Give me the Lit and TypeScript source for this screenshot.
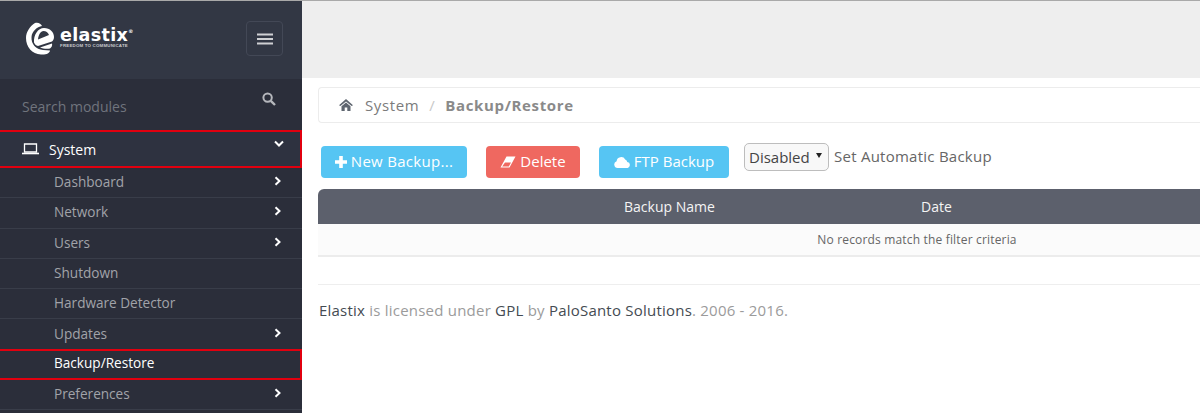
import { LitElement, html, css } from "lit";
import { customElement } from "lit/decorators.js";

const chevR = html`<svg class="chev" width="8" height="10" viewBox="0 0 8 10"><path d="M1.5 1.2 5.5 5 1.5 8.8" fill="none" stroke="#fff" stroke-width="2"/></svg>`;

const items: { label: string; arrow: boolean; active?: boolean }[] = [
  { label: "Dashboard", arrow: true },
  { label: "Network", arrow: true },
  { label: "Users", arrow: true },
  { label: "Shutdown", arrow: false },
  { label: "Hardware Detector", arrow: false },
  { label: "Updates", arrow: true },
  { label: "Backup/Restore", arrow: false, active: true },
  { label: "Preferences", arrow: true },
];

@customElement("app-root")
export class AppRoot extends LitElement {
  static styles = css`
    :host {
      display: block;
      width: 1200px;
      height: 413px;
      overflow: hidden;
      font-family: "Open Sans", "DejaVu Sans", sans-serif;
      background: #fff;
    }
    .page { display: flex; height: 413px; border-top: 1px solid #a9a9a9; box-sizing: border-box; }
    .side { width: 302px; flex: none; background: #2b2e3a; height: 412px; overflow: hidden; }
    .brand {
      height: 78px; background: #323744; display: flex; align-items: center;
      justify-content: space-between; padding: 0 19px 0 26px; box-sizing: border-box;
    }
    .logo { display: flex; align-items: center; gap: 4px; color: #fff; margin-top: -4px; }
    .logo-text { display: flex; flex-direction: column; align-items: flex-start; }
    .logo-word { font: 700 17.5px/15px "DejaVu Sans", sans-serif; letter-spacing: 0.35px; }
    .logo-word sup { font-size: 5px; line-height: 0; vertical-align: 8px; }
    .logo-tag { font: 700 4.4px/5px "Liberation Sans", sans-serif; letter-spacing: 0.2px; white-space: nowrap; color: #c9cace; }
    .burger {
      width: 37px; height: 35px; box-sizing: border-box; border: 1px solid #434856; border-radius: 4px;
      display: flex; align-items: center; justify-content: center; margin-top: -3px;
    }
    .search {
      height: 51px; display: flex; justify-content: space-between; padding: 0 26px 0 22px;
      color: #70747d; font-size: 14px; box-sizing: border-box;
    }
    .search span { margin-top: 18px; line-height: 20px; }
    .search svg { margin-top: 13px; }
    .sys {
      height: 38px; box-sizing: border-box; border: 2px solid #e1000f; border-left: none;
      background: #2e3240; display: flex; align-items: center; padding: 0 16px 0 22px; color: #fff; font-size: 14px;
    }
    .sys .name { flex: 1; margin-left: 10px; }
    .sys .down { margin-top: -10px; }
    ul { list-style: none; margin: 0; padding: 0; }
    li {
      height: 30.3px; box-sizing: border-box; border-bottom: 1px solid #393d49; display: flex; align-items: center;
      justify-content: space-between; padding: 0 20px 2px 54px; color: #a1a3a9; font-size: 13.6px;
    }
    li.active { color: #fff; border: 2px solid #e1000f; border-left: none; padding-right: 18px; padding-bottom: 4px; height: 31px; margin-top: -1px; }
    .chev { margin-top: -1px; }
    main { flex: 1; min-width: 0; display: flex; flex-direction: column; }
    .top { height: 77px; background: #eeeeee; flex: none; }
    .content { padding: 9px 0 0 16px; flex: 1; }
    .crumb {
      height: 36px; box-sizing: border-box; border: 1px solid #ececec; border-right: none; border-radius: 4px 0 0 4px;
      display: flex; align-items: center; padding-left: 20px; font-size: 15px; color: #7b7b7b; letter-spacing: 0.6px;
    }
    .crumb svg { margin-right: 12px; }
    .crumb .sep { color: #c8c8c8; margin: 0 10px; }
    .crumb b { color: #8a8a8a; font-weight: 700; letter-spacing: 0.65px; }
    .tools { display: flex; align-items: flex-start; margin-top: 19px; padding-left: 3px; height: 47px; }
    .btn {
      height: 32px; box-sizing: border-box; border-radius: 4px; color: #fff; font-size: 15px; display: flex;
      align-items: center; justify-content: center; gap: 4px; margin-top: 4px; padding-bottom: 3px;
    }
    .btn svg { margin-top: 2px; }
    .b1 { width: 146px; background: #56c5f3; letter-spacing: 0.3px; }
    .b2 { width: 94px; background: #ef6860; margin-left: 19px; }
    .b3 { width: 130px; background: #56c5f3; margin-left: 19px; }
    .sel {
      margin-left: 15px; margin-top: 1px; width: 85px; height: 28px; box-sizing: border-box; border: 1px solid #bdbdbd; border-radius: 5px;
      background: #f8f8f8; color: #444; font-size: 15px; display: flex; align-items: center; padding-left: 4px; gap: 6px;
    }
    .sel i { width: 0; height: 0; border-left: 3px solid transparent; border-right: 3px solid transparent; border-top: 5px solid #222; margin-top: -3px; }
    .auto { margin-left: 5px; margin-top: 1px; font-size: 15px; letter-spacing: 0.25px; line-height: 26px; color: #666; }
    .thead {
      height: 35px; background: #5c606c; border-radius: 6px 0 0 0; color: #f4f4f4; font-size: 14px;
      display: flex; align-items: center; white-space: nowrap;
    }
    .thead .c1 { margin-left: 306px; width: 297px; }
    .trow {
      height: 31px; background: #fbfbfb; border-bottom: 2px solid #ececec; font-size: 12px; color: #666; letter-spacing: 0.17px;
      display: flex; align-items: center; justify-content: center; padding-left: 316px;
    }
    .foot { margin-top: 27px; border-top: 1px solid #eeeeee; padding: 15px 0 0 1px; font-size: 15px; letter-spacing: 0.22px; color: #9b9b9b; line-height: 20px; }
    .foot a { color: #444b52; }
  `;

  render() {
    return html`<div class="page">
      <aside class="side">
        <div class="brand">
          <div class="logo">
            <svg width="30" height="33" viewBox="0 0 30 33">
              <path fill="#fff" d="M9 1C12 0 15 1.500 16 4C11 5 6 9 5.500 15C5 22 10 27.500 17 28L24 28.500C24 31 20 33 15 32.500C6 32 0 25 0 16C0 10 4 4 9 1Z"/>
              <path fill="#fff" fill-rule="evenodd" d="M8 20.500C7.500 13 12 6 18 6C24 6 28 10 28 15C28 17 27 18.500 26 19.500L12 24C10 23.500 8.500 22 8 20.500ZM12 17.500 23 13C22 10.500 20 9 17.500 9C14.500 9 12.500 13 12 17.500Z"/>
              <path fill="#fff" d="M14 25.500 26 21.500C26.500 23.500 25.500 25.500 24 26.500C21 27 17 26.800 14 25.500Z"/>
            </svg>
            <div class="logo-text">
              <div class="logo-word">elastix<sup>®</sup></div>
              <div class="logo-tag">FREEDOM TO COMMUNICATE</div>
            </div>
          </div>
          <div class="burger">
            <svg width="16" height="12" viewBox="0 0 16 12"><path d="M0 1.5H16M0 6H16M0 10.5H16" stroke="#cfd0d3" stroke-width="2"/></svg>
          </div>
        </div>
        <div class="search">
          <span>Search modules</span>
          <svg width="14" height="14" viewBox="0 0 14 14"><circle cx="5.6" cy="5.6" r="4.2" fill="none" stroke="#b5b7bc" stroke-width="2"/><path d="M8.8 8.8 13 13" stroke="#b5b7bc" stroke-width="2.4"/></svg>
        </div>
        <div class="sys">
          <svg width="17" height="12" viewBox="0 0 17 12"><path d="M2.5 1H14.5V9H2.5Z" fill="none" stroke="#fff" stroke-width="1.3"/><path d="M0 10.5H17" stroke="#fff" stroke-width="1.6"/></svg>
          <span class="name">System</span>
          <svg class="down" width="10" height="8" viewBox="0 0 10 8"><path d="M1 1.5 5 5.5 9 1.5" fill="none" stroke="#fff" stroke-width="2"/></svg>
        </div>
        <ul>
          ${items.map((i) => html`<li class=${i.active ? "active" : ""}><span>${i.label}</span>${i.arrow ? chevR : ""}</li>`)}
        </ul>
      </aside>
      <main>
        <div class="top"></div>
        <div class="content">
          <div class="crumb">
            <svg width="14" height="12" viewBox="0 0 14 12"><path d="M7 0 14 6.2 12.6 7 7 2.4 1.4 7 0 6.2ZM2.5 7.2 7 3.6 11.5 7.2V12H8.3V8.5H5.7V12H2.5Z" fill="#5f6670"/></svg>
            <span>System</span><span class="sep">/</span><b>Backup/Restore</b>
          </div>
          <div class="tools">
            <div class="btn b1">
              <svg width="12" height="12" viewBox="0 0 12 12"><path d="M4.2 0H7.8V4.2H12V7.8H7.8V12H4.2V7.8H0V4.2H4.2Z" fill="#fff"/></svg>
              <span>New Backup...</span>
            </div>
            <div class="btn b2">
              <svg width="16" height="12" viewBox="0 0 16 12"><path d="M6.5 0.5H15.5L9.5 11.5H0.5ZM5 6.5 2.2 10.5H8.8L11 6.5Z" fill="#fff" fill-rule="evenodd"/></svg>
              <span>Delete</span>
            </div>
            <div class="btn b3">
              <svg width="16" height="12" viewBox="0 0 16 12"><path d="M3.6 12A3.5 3.5 0 0 1 2.6 5.2 4.6 4.6 0 0 1 11.2 3.4 3 3 0 0 1 13.2 6 3 3 0 0 1 12.5 12Z" fill="#fff"/></svg>
              <span>FTP Backup</span>
            </div>
            <div class="sel"><span>Disabled</span><i></i></div>
            <div class="auto">Set Automatic Backup</div>
          </div>
          <div class="thead"><div class="c1">Backup Name</div><div>Date</div></div>
          <div class="trow">No records match the filter criteria</div>
          <div class="foot"><a>Elastix</a> is licensed under <a>GPL</a> by <a>PaloSanto Solutions</a>. 2006 - 2016.</div>
        </div>
      </main>
    </div>`;
  }
}
